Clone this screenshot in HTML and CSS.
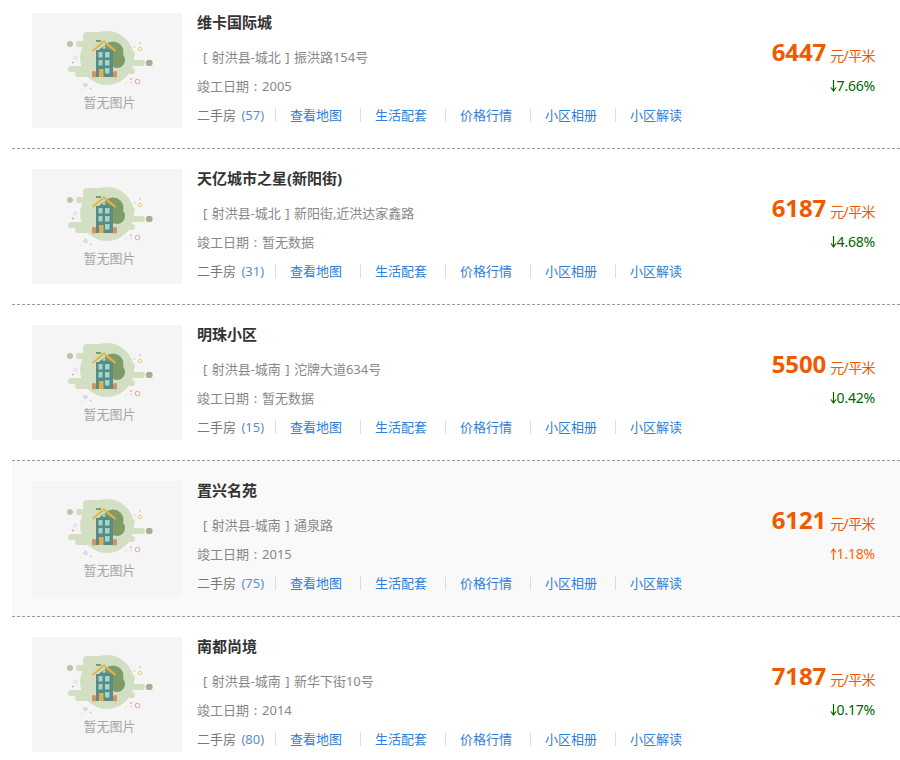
FILE: index.html
```html
<!DOCTYPE html>
<html lang="zh-CN">
<head>
<meta charset="utf-8">
<title>小区列表</title>
<link rel="stylesheet" href="styles.css">
</head>
<body>
<svg class="defs" width="0" height="0" aria-hidden="true">
  <symbol id="noimg" viewBox="0 0 150 80">
    <g fill="#d3dfc3">
      <circle cx="75" cy="45" r="27"/>
      <rect x="51" y="19" width="30" height="10" rx="4"/>
      <rect x="44" y="28" width="30" height="6" rx="3"/>
      <rect x="70" y="38" width="33" height="6" rx="3"/>
      <rect x="80" y="47" width="33" height="6" rx="3"/>
      <rect x="36" y="53" width="34" height="6" rx="3"/>
      <rect x="43" y="58" width="30" height="6" rx="3"/>
      <rect x="80" y="55" width="23" height="6" rx="3"/>
    </g>
    <circle cx="38" cy="31" r="3" fill="#b7c6a5"/>
    <rect x="114" y="47" width="6.500" height="6" rx="2" fill="#a3b092"/>
    <circle cx="81" cy="39" r="10.500" fill="#7f9c66"/>
    <circle cx="85" cy="47" r="8" fill="#7f9c66"/>
    <rect x="64" y="37" width="17" height="27" fill="#5d8b82"/>
    <path d="M60.500 38 72 28.500 83.500 38" fill="none" stroke="#e4b44e" stroke-width="2.200"/>
    <path d="M66 37.500 72 32.500 78 37.500z" fill="#5d8b82"/>
    <rect x="64" y="27" width="5" height="2" fill="#7f9c66"/>
    <g fill="#9ad8d0">
      <circle cx="72" cy="34.500" r="1.500"/>
      <rect x="66.500" y="39" width="4" height="5.500"/>
      <rect x="73" y="39" width="4.500" height="5.500"/>
      <rect x="66.500" y="47" width="4" height="5.500"/>
      <rect x="73" y="47" width="4.500" height="5.500"/>
      <rect x="73" y="55" width="4.500" height="5.500"/>
    </g>
    <rect x="67" y="56" width="4.500" height="8" fill="#e0b050"/>
    <rect x="60" y="58" width="4" height="6.500" rx="1.500" fill="#cf9468"/>
    <rect x="81" y="58" width="4" height="6.500" rx="1.500" fill="#cf9468"/>
    <g fill="none" stroke-width="1">
      <circle cx="108" cy="36" r="1.800" stroke="#e8d070"/>
      <circle cx="105.500" cy="68.500" r="2.300" stroke="#f0a0a0"/>
      <circle cx="53.500" cy="72" r="1.500" stroke="#c0b8de"/>
      <circle cx="43.500" cy="44.500" r="1.500" stroke="#d8d2ec"/>
    </g>
    <g fill="#f4a0a6">
      <circle cx="41" cy="49.500" r="1.100"/>
      <circle cx="99" cy="66" r=".9"/>
      <circle cx="58.500" cy="75.500" r=".8"/>
      <circle cx="102.500" cy="34" r=".7"/>
    </g>
    <g fill="#d0c9e6">
      <circle cx="108" cy="30" r="1"/>
      <circle cx="99" cy="69.500" r=".8"/>
    </g>
    <g fill="#f2e3a8">
      <circle cx="94" cy="70" r=".9"/>
      <circle cx="49" cy="76" r=".7"/>
      <circle cx="45" cy="48.500" r=".7"/>
    </g>
  </symbol>
  <symbol id="arrow-down" viewBox="0 0 7 12">
    <path d="M3.500 0v10.500M1 7.500l2.500 3.500L6 7.500" fill="none" stroke="currentColor" stroke-width="1.200"/>
  </symbol>
  <symbol id="arrow-up" viewBox="0 0 7 12">
    <path d="M3.500 12V1.500M1 4.500l2.500-3.500L6 4.500" fill="none" stroke="currentColor" stroke-width="1.200"/>
  </symbol>
</svg>
<main class="list">
  <article class="row first">
    <div class="thumb"><svg class="art"><use href="#noimg"/></svg><span class="thumb-text">暂无图片</span></div>
    <div class="info">
      <h3 class="name">维卡国际城</h3>
      <p class="addr">[ 射洪县-城北 ] 振洪路154号</p>
      <p class="date">竣工日期<span class="colon">:</span>2005</p>
      <div class="links"><span class="link-item stock">二手房 <a class="count">(57)</a></span><a class="link-item">查看地图</a><a class="link-item">生活配套</a><a class="link-item">价格行情</a><a class="link-item">小区相册</a><a class="link-item last">小区解读</a></div>
    </div>
    <div class="price-box">
      <p class="price"><b class="num">6447</b> 元/平米</p>
      <p class="pct down"><svg class="arrow"><use href="#arrow-down"/></svg>7.66%</p>
    </div>
  </article>
  <article class="row">
    <div class="thumb"><svg class="art"><use href="#noimg"/></svg><span class="thumb-text">暂无图片</span></div>
    <div class="info">
      <h3 class="name">天亿城市之星(新阳街)</h3>
      <p class="addr">[ 射洪县-城北 ] 新阳街,近洪达家鑫路</p>
      <p class="date">竣工日期<span class="colon">:</span>暂无数据</p>
      <div class="links"><span class="link-item stock">二手房 <a class="count">(31)</a></span><a class="link-item">查看地图</a><a class="link-item">生活配套</a><a class="link-item">价格行情</a><a class="link-item">小区相册</a><a class="link-item last">小区解读</a></div>
    </div>
    <div class="price-box">
      <p class="price"><b class="num">6187</b> 元/平米</p>
      <p class="pct down"><svg class="arrow"><use href="#arrow-down"/></svg>4.68%</p>
    </div>
  </article>
  <article class="row">
    <div class="thumb"><svg class="art"><use href="#noimg"/></svg><span class="thumb-text">暂无图片</span></div>
    <div class="info">
      <h3 class="name">明珠小区</h3>
      <p class="addr">[ 射洪县-城南 ] 沱牌大道634号</p>
      <p class="date">竣工日期<span class="colon">:</span>暂无数据</p>
      <div class="links"><span class="link-item stock">二手房 <a class="count">(15)</a></span><a class="link-item">查看地图</a><a class="link-item">生活配套</a><a class="link-item">价格行情</a><a class="link-item">小区相册</a><a class="link-item last">小区解读</a></div>
    </div>
    <div class="price-box">
      <p class="price"><b class="num">5500</b> 元/平米</p>
      <p class="pct down"><svg class="arrow"><use href="#arrow-down"/></svg>0.42%</p>
    </div>
  </article>
  <article class="row hover">
    <div class="thumb"><svg class="art"><use href="#noimg"/></svg><span class="thumb-text">暂无图片</span></div>
    <div class="info">
      <h3 class="name">置兴名苑</h3>
      <p class="addr">[ 射洪县-城南 ] 通泉路</p>
      <p class="date">竣工日期<span class="colon">:</span>2015</p>
      <div class="links"><span class="link-item stock">二手房 <a class="count">(75)</a></span><a class="link-item">查看地图</a><a class="link-item">生活配套</a><a class="link-item">价格行情</a><a class="link-item">小区相册</a><a class="link-item last">小区解读</a></div>
    </div>
    <div class="price-box">
      <p class="price"><b class="num">6121</b> 元/平米</p>
      <p class="pct up"><svg class="arrow"><use href="#arrow-up"/></svg>1.18%</p>
    </div>
  </article>
  <article class="row">
    <div class="thumb"><svg class="art"><use href="#noimg"/></svg><span class="thumb-text">暂无图片</span></div>
    <div class="info">
      <h3 class="name">南都尚境</h3>
      <p class="addr">[ 射洪县-城南 ] 新华下街10号</p>
      <p class="date">竣工日期<span class="colon">:</span>2014</p>
      <div class="links"><span class="link-item stock">二手房 <a class="count">(80)</a></span><a class="link-item">查看地图</a><a class="link-item">生活配套</a><a class="link-item">价格行情</a><a class="link-item">小区相册</a><a class="link-item last">小区解读</a></div>
    </div>
    <div class="price-box">
      <p class="price"><b class="num">7187</b> 元/平米</p>
      <p class="pct down"><svg class="arrow"><use href="#arrow-down"/></svg>0.17%</p>
    </div>
  </article>
</main>
</body>
</html>
```
FILE: styles.css
```css
* { box-sizing: border-box; }
html, body { margin: 0; padding: 0; background: #fff; overflow: hidden; }
body {
  height: 760px;
  font-family: "Noto Sans", "Noto Sans CJK SC", sans-serif;
  font-size: 13px;
  color: #666;
}
.defs { position: absolute; }
.list { margin-left: 12px; width: 888px; }
.row {
  display: flex;
  height: 156px;
  padding: 20px 25px 0 20px;
  border-bottom: 1px dashed #999;
}
.row.first { height: 149px; padding-top: 13px; }
.row.hover { background: #f9f9f9; }
.thumb {
  width: 150px;
  height: 115px;
  background: #f5f5f5;
  display: flex;
  flex-direction: column;
  align-items: center;
  flex: none;
}
.art { width: 150px; height: 80px; display: block; }
.thumb-text { color: #a6a6a6; line-height: 18px; padding-left: 5px; }
.info { flex: 1; margin-left: 15px; min-width: 0; }
.name {
  margin: -1px 0 0;
  font-size: 15px;
  font-weight: 700;
  line-height: 20px;
  color: #333;
}
.addr { margin: 15px 0 0; padding-left: 6px; line-height: 20px; color: #888; word-spacing: 1px; }
.date { margin: 9px 0 0; line-height: 20px; color: #888; }
.colon { display: inline-block; width: 13px; text-align: center; }
.links { display: flex; align-items: center; margin-top: 9px; height: 20px; }
.link-item {
  line-height: 14px;
  height: 14px;
  padding: 0 18px 0 14px;
  border-right: 1px solid #ddd;
  color: #2f80d8;
  white-space: nowrap;
}
.link-item.stock { width: 79px; padding: 0; color: #777; }
.link-item.last { border-right: 0; }
.count { color: #5b8bc9; margin-left: 2px; }
.price-box { width: 140px; flex: none; text-align: right; }
.price { margin: 29px 0 0; line-height: 20px; font-size: 14px; color: #ee5a00; height: 20px; letter-spacing: -.6px; }
.num { font-size: 24px; font-weight: 700; line-height: 20px; letter-spacing: -.1px; margin-right: 1px; }
.pct { margin: 14px 0 0; font-size: 14px; line-height: 20px; letter-spacing: -.2px; }
.arrow { display: inline-block; width: 7px; height: 12px; margin-right: 0; vertical-align: -1px; }
.down { color: #006600; }
.up { color: #ff6600; }
```
